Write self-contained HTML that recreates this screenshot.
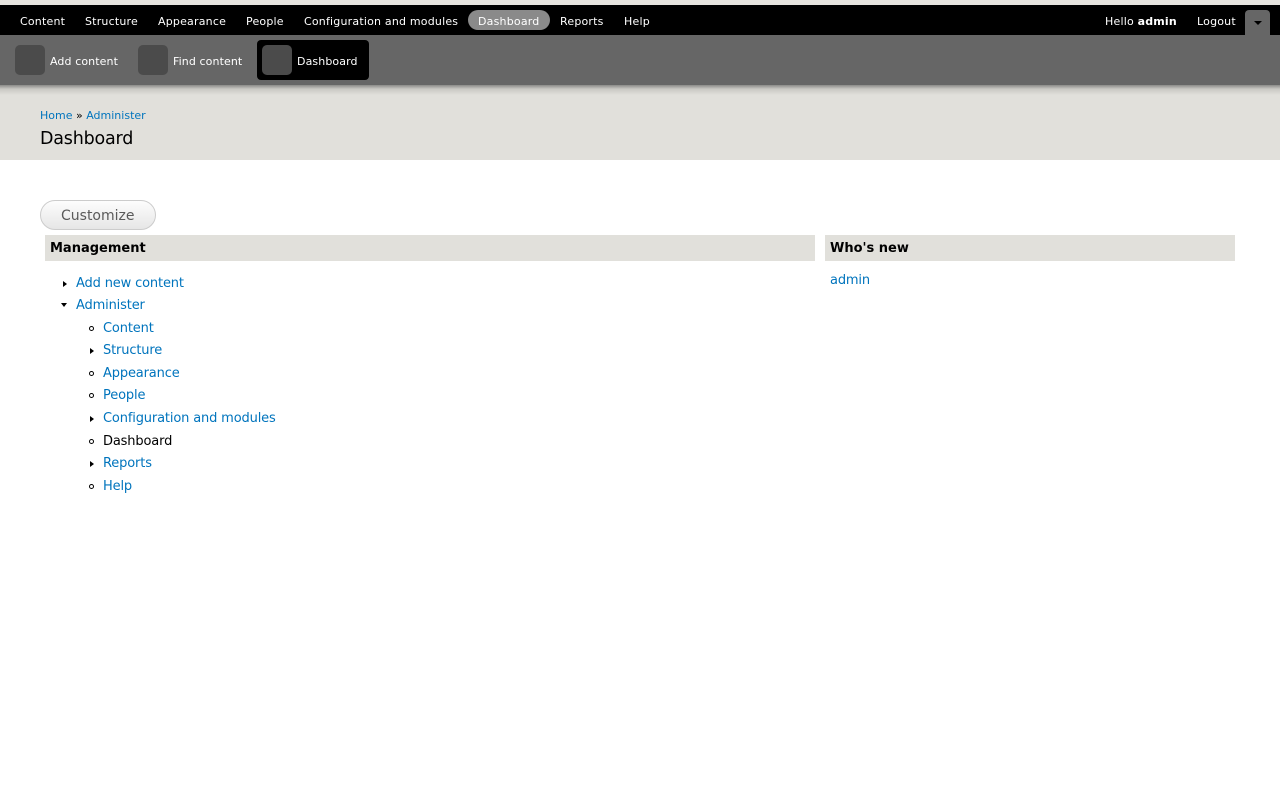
<!DOCTYPE html>
<html><head><meta charset="utf-8"><style>
*{margin:0;padding:0;box-sizing:border-box}
body{width:1280px;height:800px;background:#fff;font-family:"DejaVu Sans",Verdana,sans-serif;position:relative;overflow:hidden}
.a{position:absolute;white-space:nowrap}
#top{position:absolute;left:0;top:0;width:1280px;height:5px;background:#e6e4df}
#bar{position:absolute;left:0;top:5px;width:1280px;height:30px;background:#000}
#bar .a{font-size:11px;color:#fff;top:10px;letter-spacing:0.2px}
#tb{position:absolute;left:0;top:35px;width:1280px;height:50px;background:#666}
#sh{position:absolute;left:0;top:85px;width:1280px;height:75px;background:linear-gradient(#8a8a88 0px,#c9c8c3 4px,#e1e0db 10px,#e1e0db)}
.ic{position:absolute;width:30px;height:30px;border-radius:5px;background:#4b4b4b;top:45px}
.tl{font-size:11px;color:#fff;top:55px;letter-spacing:0.1px}
a,.lk{color:#0074bd;text-decoration:none}
.m{font-size:13px;letter-spacing:-0.15px;margin-top:1px}
.bul{position:absolute;width:5px;height:5px;border:1px solid #000;border-radius:50%}
.tri{position:absolute;width:0;height:0;border-top:3.5px solid transparent;border-bottom:3.5px solid transparent;border-left:4px solid #000}
.trd{position:absolute;width:0;height:0;border-left:3.5px solid transparent;border-right:3.5px solid transparent;border-top:4px solid #000}
</style></head><body>
<div id="top"></div>
<div id="bar">
<div class="a" style="left:20px">Content</div>
<div class="a" style="left:85px">Structure</div>
<div class="a" style="left:158px">Appearance</div>
<div class="a" style="left:246px">People</div>
<div class="a" style="left:304px">Configuration and modules</div>
<div style="position:absolute;left:468px;top:5px;width:82px;height:20px;border-radius:10px;background:#8a8a8a"></div>
<div class="a" style="left:478px">Dashboard</div>
<div class="a" style="left:560px">Reports</div>
<div class="a" style="left:624px">Help</div>
<div class="a" style="left:1105px">Hello <b>admin</b></div>
<div class="a" style="left:1197px">Logout</div>
<div style="position:absolute;left:1245px;top:5px;width:25px;height:26px;background:#666;border-radius:4px 4px 0 0"></div>
<div style="position:absolute;left:1254px;top:16px;border-left:4px solid transparent;border-right:4px solid transparent;border-top:4px solid #000"></div>
</div>
<div id="tb"></div>
<div style="position:absolute;left:257px;top:40px;width:112px;height:40px;background:#000;border-radius:4px"></div>
<div class="ic" style="left:15px"></div><div class="a tl" style="left:50px">Add content</div>
<div class="ic" style="left:138px"></div><div class="a tl" style="left:173px">Find content</div>
<div class="ic" style="left:262px"></div><div class="a tl" style="left:297px">Dashboard</div>
<div id="sh"></div>
<div class="a" style="left:40px;top:109px;font-size:11px"><a>Home</a> » <a>Administer</a></div>
<div class="a" style="left:40px;top:129px;font-size:17.5px;color:#000;letter-spacing:-0.2px">Dashboard</div>
<div style="position:absolute;left:40px;top:200px;width:116px;height:30px;border:1px solid #ccc;border-radius:15px;background:linear-gradient(#fdfdfd,#e6e6e6)"></div>
<div class="a" style="left:61px;top:208px;font-size:14px;color:#5a5a5a">Customize</div>
<div style="position:absolute;left:45px;top:235px;width:770px;height:26px;background:#e1e0db"></div>
<div class="a" style="left:50px;top:241px;font-size:13px;font-weight:bold">Management</div>
<div style="position:absolute;left:825px;top:235px;width:410px;height:26px;background:#e1e0db"></div>
<div class="a" style="left:830px;top:241px;font-size:13px;font-weight:bold">Who's new</div>
<div class="a m lk" style="left:830px;top:272px">admin</div>
<div class="tri" style="left:63px;top:281px"></div><div class="a m lk" style="left:76px;top:275px">Add new content</div>
<div class="trd" style="left:61px;top:303px"></div><div class="a m lk" style="left:76px;top:297px">Administer</div>
<div class="bul" style="left:89px;top:326px"></div><div class="a m lk" style="left:103px;top:320px">Content</div>
<div class="tri" style="left:90px;top:348px"></div><div class="a m lk" style="left:103px;top:342px">Structure</div>
<div class="bul" style="left:89px;top:371px"></div><div class="a m lk" style="left:103px;top:365px">Appearance</div>
<div class="bul" style="left:89px;top:393px"></div><div class="a m lk" style="left:103px;top:387px">People</div>
<div class="tri" style="left:90px;top:416px"></div><div class="a m lk" style="left:103px;top:410px">Configuration and modules</div>
<div class="bul" style="left:89px;top:439px"></div><div class="a m" style="left:103px;top:433px;color:#000">Dashboard</div>
<div class="tri" style="left:90px;top:461px"></div><div class="a m lk" style="left:103px;top:455px">Reports</div>
<div class="bul" style="left:89px;top:484px"></div><div class="a m lk" style="left:103px;top:478px">Help</div>
</body></html>
